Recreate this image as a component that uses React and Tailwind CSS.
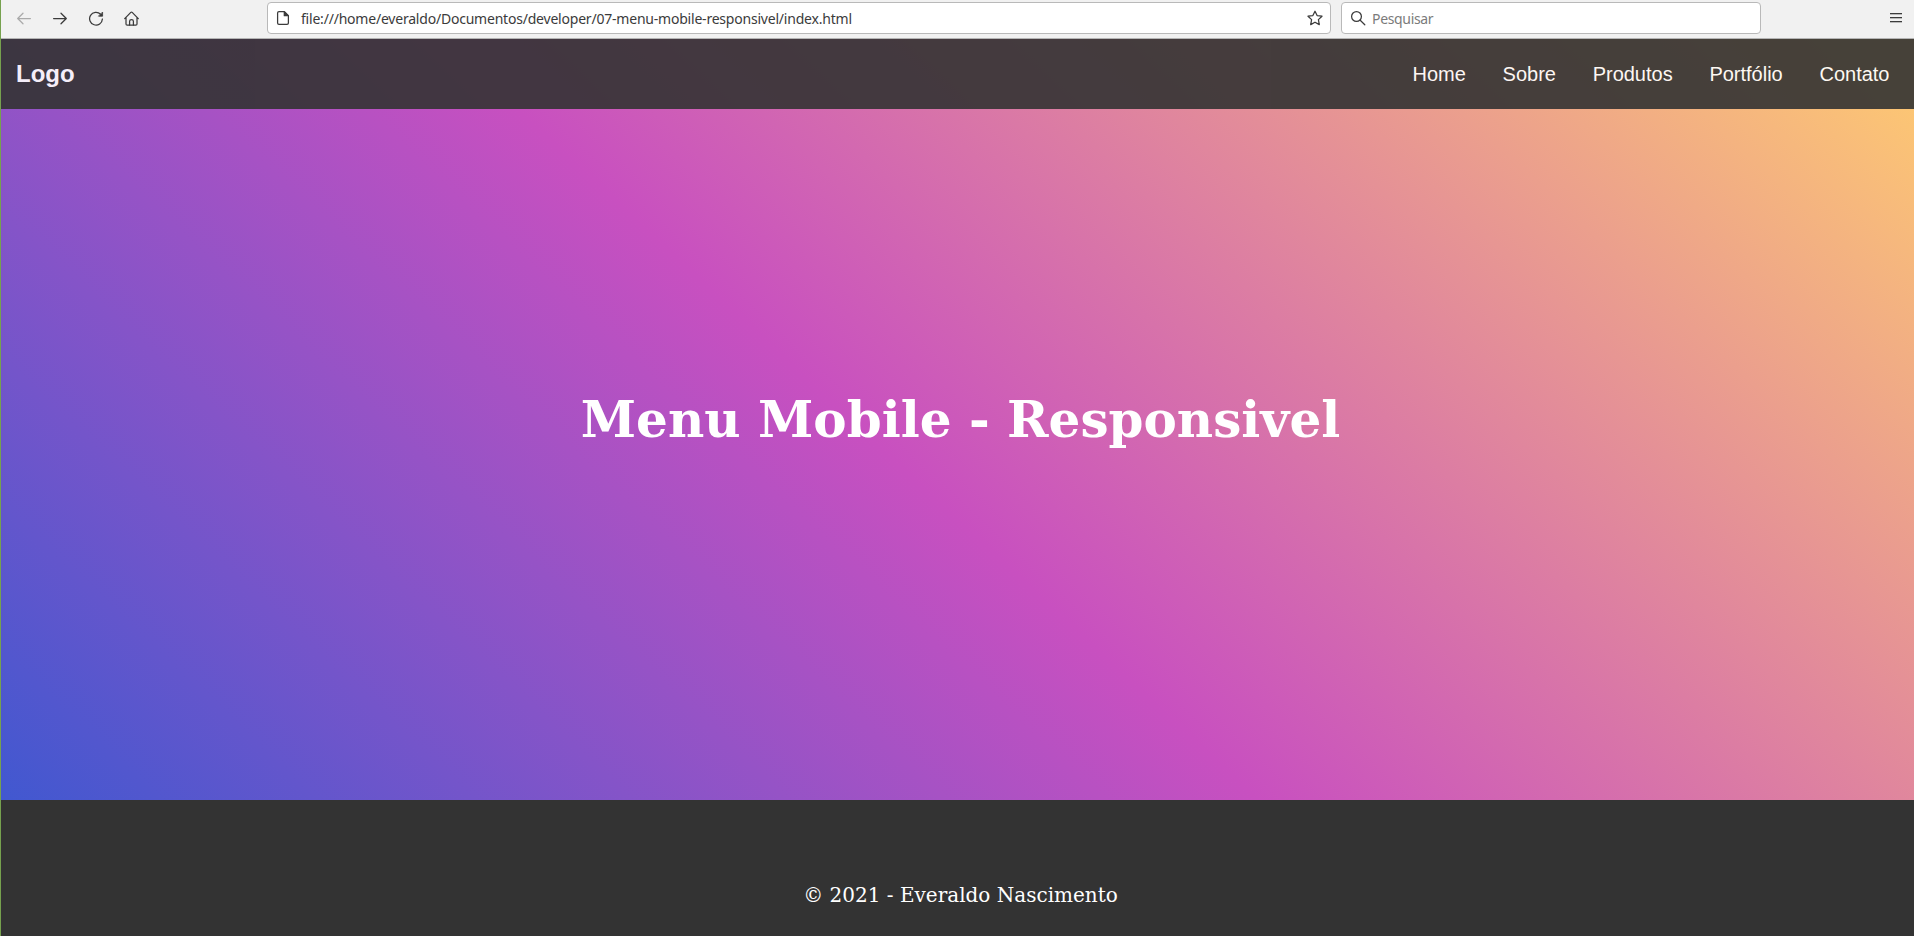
const LINKS = ['Home', 'Sobre', 'Produtos', 'Portfólio', 'Contato'];

const line = {
  width: 16,
  height: 16,
  viewBox: '0 0 16 16',
  fill: 'none',
  stroke: 'currentColor',
  strokeWidth: 1.25,
  strokeLinecap: 'round',
  strokeLinejoin: 'round',
};

function BackIcon() {
  return (
    <svg {...line}>
      <path d="M14.4 8.5H1.8M7 3.2L1.7 8.5L7 13.8" />
    </svg>
  );
}

function ForwardIcon() {
  return (
    <svg {...line}>
      <path d="M1.6 8.5H14.2M9 3.2L14.3 8.5L9 13.8" />
    </svg>
  );
}

function ReloadIcon() {
  return (
    <svg {...line}>
      <path d="M12.6 4.2A6.4 6.4 0 1 0 14.4 9" />
      <path d="M14.6 2.4V6.2H10.8Z" fill="currentColor" strokeWidth="0.8" />
    </svg>
  );
}

function HomeIcon() {
  return (
    <svg {...line}>
      <path d="M0.7 8.6L6.8 2.4Q7.5 1.7 8.2 2.4L14.3 8.6M2 7.4V14Q2 15.2 3.2 15.2H11.8Q13 15.2 13 14V7.4" />
      <path d="M5.6 15V11.2Q5.6 9.7 7.5 9.7Q9.4 9.7 9.4 11.2V15" />
    </svg>
  );
}

function PageIcon() {
  return (
    <svg {...line}>
      <path d="M9.3 1.6H4Q2.6 1.6 2.6 3V13Q2.6 14.4 4 14.4H12Q13.4 14.4 13.4 13V5.7Z" />
      <path d="M9.3 1.8V5.7H13.2Z" fill="currentColor" />
    </svg>
  );
}

function StarIcon() {
  return (
    <svg {...line}>
      <path d="M8 1.2L10.1 5.6L15 6.2L11.4 9.6L12.3 14.6L8 12.2L3.7 14.6L4.6 9.6L1 6.2L5.9 5.6Z" />
    </svg>
  );
}

function SearchIcon() {
  return (
    <svg {...line}>
      <circle cx="6.5" cy="6.5" r="4.9" />
      <path d="M10.2 10.2L14.8 14.8" />
    </svg>
  );
}

function MenuIcon() {
  return (
    <svg width="12" height="10" viewBox="0 0 12 10" fill="#3b3b3b">
      <rect y="0" width="12" height="1.3" />
      <rect y="4" width="12" height="1.3" />
      <rect y="8" width="12" height="1.3" />
    </svg>
  );
}

function Toolbar() {
  return (
    <div className="flex h-[39px] w-[1913px] items-start border-b border-[#b4b4b4] bg-[#f1f1f1] pt-[2px] font-['Noto_Sans',sans-serif] text-sm text-[#3b3b3b]">
      <div className="flex h-8 w-[266px] items-center gap-5 pl-[15px]">
        <span className="text-[#aaaaaa]"><BackIcon /></span>
        <ForwardIcon />
        <ReloadIcon />
        <HomeIcon />
      </div>
      <div className="flex h-8 w-[1064px] items-center rounded-[4px] border border-[#b9b9b9] bg-white pr-[7px] pl-[7px]">
        <PageIcon />
        <span className="ml-[10px] flex-1 pt-[2px] tracking-[-0.21px] whitespace-nowrap">
          file:///home/everaldo/Documentos/developer/07-menu-mobile-responsivel/index.html
        </span>
        <StarIcon />
      </div>
      <div className="ml-[10px] flex h-8 w-[420px] items-center rounded-[4px] border border-[#b9b9b9] bg-white pl-[8px]">
        <SearchIcon />
        <span className="ml-[6px] pt-[2px] tracking-[-0.33px] text-[#7b7b7b]">Pesquisar</span>
      </div>
      <div className="ml-auto pt-[11px] pr-[12px]">
        <MenuIcon />
      </div>
    </div>
  );
}

export default function App() {
  return (
    <div className="flex h-[936px] w-[1914px] flex-col overflow-hidden border-l border-[#76a14e] font-['DejaVu_Serif',serif]">
      <Toolbar />
      <main className="flex h-[761px] w-[1919px] shrink-0 flex-col bg-[linear-gradient(43deg,#4158D0_0%,#C850C0_46%,#FFCC70_100%)]">
        <nav className="flex h-[70px] w-[1913px] items-center justify-between bg-[#333333] pr-[24.5px] pl-[15px] font-['Liberation_Sans',Arial,sans-serif] text-white opacity-90">
          <span className="text-2xl font-bold">Logo</span>
          <ul className="flex gap-[36.7px] text-xl">
            {LINKS.map((label) => (
              <li key={label}>{label}</li>
            ))}
          </ul>
        </nav>
        <div className="flex flex-1 items-center justify-center pb-[70px]">
          <h1 className="text-[50px] leading-none font-bold text-white">Menu Mobile - Responsivel</h1>
        </div>
      </main>
      <footer className="flex h-[136px] w-[1919px] shrink-0 justify-center bg-[#333333] pt-[83px] text-xl leading-[24px] text-white">
        <p>© 2021 - Everaldo Nascimento</p>
      </footer>
    </div>
  );
}
